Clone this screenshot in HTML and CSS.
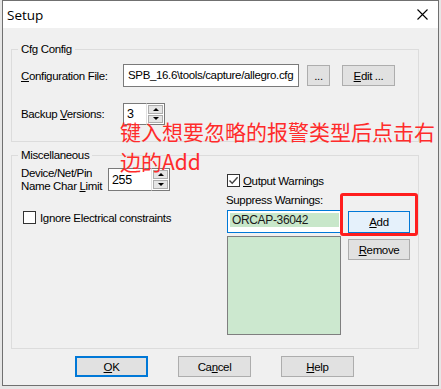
FILE: index.html
```html
<!DOCTYPE html>
<html>
<head>
<meta charset="utf-8">
<link rel="stylesheet" href="styles.css">
</head>
<body>
<div class="dialog">
  <div class="titlebar">
    <span class="title">Setup</span>
    <svg class="close" width="11" height="11" viewBox="0 0 11 11"><path d="M0.5 0.5L10.5 10.5M10.5 0.5L0.5 10.5" stroke="#000" stroke-width="1.1" fill="none"/></svg>
  </div>
  <div class="content">
    <fieldset class="group cfg">
      <legend>Cfg Config</legend>
      <div class="row row-file">
        <span class="label w-cfg"><u>C</u>onfiguration File:</span>
        <div class="edit file">SPB_16.6\tools/capture/allegro.cfg</div>
        <div class="btn browse">...</div>
        <div class="btn editbtn"><u>E</u>dit ...</div>
      </div>
      <div class="row row-backup">
        <span class="label w-cfg">Backup <u>V</u>ersions:</span>
        <div class="spin spin-small">
          <div class="spin-val">3</div>
          <div class="spin-btns"><div class="sb"><i class="tri up"></i></div><div class="sb"><i class="tri down"></i></div></div>
        </div>
      </div>
    </fieldset>

    <fieldset class="group misc">
      <legend>Miscellaneous</legend>
      <div class="misc-body">
        <div class="misc-left">
          <div class="limit-row">
            <span class="label limit-label">Device/Net/Pin<br>Name Char <u>L</u>imit</span>
            <div class="spin spin-wide">
              <div class="spin-val">255</div>
              <div class="spin-btns"><div class="sb"><i class="tri up"></i></div><div class="sb"><i class="tri down"></i></div></div>
            </div>
          </div>
          <div class="check-row ignore">
            <span class="checkbox"></span>
            <span class="check-text">Ignore Electrical constraints</span>
          </div>
        </div>
        <div class="misc-right">
          <div class="check-row output">
            <span class="checkbox"><svg width="11" height="11" viewBox="0 0 11 11"><path d="M1.5 5.5L4.2 8.3L9.6 2.2" stroke="#444" stroke-width="1.4" fill="none"/></svg></span>
            <span class="check-text"><u>O</u>utput Warnings</span>
          </div>
          <div class="suppress-label">Suppress Warnings:</div>
          <div class="warn-area">
            <div class="warn-lists">
              <div class="warn-edit"><span class="sel">ORCAP-36042</span></div>
              <div class="warn-list"></div>
            </div>
            <div class="warn-btns">
              <div class="btn add"><u>A</u>dd</div>
              <div class="btn remove"><u>R</u>emove</div>
            </div>
          </div>
        </div>
      </div>
    </fieldset>

    <div class="footer">
      <div class="btn fbtn ok"><u>O</u>K</div>
      <div class="btn fbtn">Ca<u>n</u>cel</div>
      <div class="btn fbtn"><u>H</u>elp</div>
    </div>
  </div>

  <div class="note">键入想要忽略的报警类型后点击右<br>边的Add</div>
  <div class="highlight-box"></div>
</div>
</body>
</html>
```
FILE: styles.css
```css
* { box-sizing: border-box; }
html, body { margin: 0; padding: 0; }
body {
  width: 441px;
  height: 389px;
  overflow: hidden;
  background: #e6e6e6;
  font-family: "Liberation Sans", Arial, sans-serif;
  font-size: 11.5px;
  letter-spacing: -0.35px;
  color: #000;
}
u { text-decoration: underline; text-underline-offset: 1px; }

.dialog {
  position: relative;
  margin-left: 2px;
  width: 437px;
  height: 386px;
  border: 1px solid #707070;
  background: #f0f0f0;
  display: flex;
  flex-direction: column;
}

.titlebar {
  height: 27px;
  flex: none;
  background: #fff;
  display: flex;
  align-items: center;
  justify-content: space-between;
  padding: 0 10px 0 4px;
}
.title {
  font-family: "Open Sans", "Noto Sans", sans-serif;
  font-size: 13.5px;
  letter-spacing: 0;
  line-height: 18px;
}
.close { display: block; }

.content {
  padding: 14px 0 0 8px;
}

.group {
  margin: 0;
  width: 408px;
  border: 1px solid #dcdcdc;
  padding: 7px 8px 16px 9px;
  min-width: 0;
}
.group legend {
  line-height: 15px;
  padding: 0 3px;
  margin-left: -3px;
}

.row { display: flex; align-items: center; }
.row-file { height: 23px; }
.row-backup { height: 22px; margin-top: 16px; }
.label { flex: none; white-space: nowrap; }
.w-cfg { width: 102px; }

.edit {
  background: #fff;
  border: 1px solid #7a7a7a;
}
.file {
  width: 176px;
  height: 23px;
  line-height: 21px;
  padding-left: 4px;
  white-space: nowrap;
  overflow: hidden;
}

.btn {
  background: #e1e1e1;
  border: 1px solid #adadad;
  display: flex;
  align-items: center;
  justify-content: center;
  white-space: nowrap;
}
.browse { width: 23px; height: 21px; margin-left: 8px; }
.editbtn { width: 53px; height: 21px; margin-left: 12px; }

.spin { display: flex; flex: none; }
.spin-small { height: 22px; }
.spin-wide { height: 23px; }
.spin-val {
  background: #fff;
  border: 1px solid #7a7a7a;
  border-right: none;
  padding-left: 3px;
  display: flex;
  align-items: center;
  font-size: 12.5px;
}
.spin-small .spin-val { width: 23px; }
.spin-wide .spin-val { width: 43px; }
.spin-btns {
  width: 19px;
  display: flex;
  flex-direction: column;
  background: #fff;
  border: 1px solid #7a7a7a;
  border-left: 1px solid #e0e0e0;
  padding: 1px;
  gap: 1px;
}
.sb {
  flex: 1;
  background: #e5e5e5;
  border: 1px solid #adadad;
  display: flex;
  align-items: center;
  justify-content: center;
}
.tri { display: block; width: 0; height: 0; border-left: 3px solid transparent; border-right: 3px solid transparent; }
.tri.up { border-bottom: 3px solid #000; }
.tri.down { border-top: 3px solid #000; }

.misc { margin-top: 6px; padding: 0 8px 13px 9px; }
.misc-body { display: flex; }
.misc-left { width: 205px; flex: none; }
.limit-row { display: flex; align-items: flex-start; }
.limit-label { width: 87px; line-height: 13px; margin-top: 4px; }
.spin-wide { margin-top: 5px; }

.check-row { display: flex; align-items: center; height: 13px; white-space: nowrap; }
.checkbox {
  width: 13px;
  height: 13px;
  flex: none;
  border: 1px solid #333;
  background: #fff;
  display: flex;
  align-items: center;
  justify-content: center;
}
.checkbox svg { display: block; }
.ignore { margin-top: 18px; padding-left: 2px; }
.ignore .check-text { margin-left: 4px; }

.misc-right { flex: 1; }
.output { margin-top: 11px; padding-left: 1px; }
.output .check-text { margin-left: 3px; }
.suppress-label { margin-top: 7px; line-height: 13px; }

.warn-area { display: flex; margin-top: 3px; }
.warn-lists { width: 114px; margin-left: 1px; }
.warn-edit {
  height: 23px;
  background: #fff;
  border: 1px solid #0078d7;
  padding: 2px 1px 0 2px;
}
.sel {
  display: block;
  background: #c8e7ca;
  height: 14px;
  line-height: 14px;
  padding-left: 2px;
  color: #1a1a1a;
  font-size: 12px;
}
.warn-list {
  margin-top: 3px;
  height: 99px;
  background: #cce8cf;
  border: 1px solid #7f7f7f;
}
.warn-btns { margin-left: 7px; width: 62px; }
.add { height: 22px; margin-top: 1px; background: #e5f1fb; border-color: #0078d7; }
.remove { height: 21px; margin-top: 6px; }

.footer {
  display: flex;
  gap: 30px;
  margin-top: 7px;
  margin-left: 64px;
}
.fbtn { width: 73px; height: 21px; }
.ok { border: 2px solid #0078d7; }

.note {
  position: absolute;
  left: 117px;
  top: 115px;
  width: 320px;
  font-family: "Noto Sans CJK SC", "Noto Sans", sans-serif;
  font-size: 21px;
  letter-spacing: 0;
  line-height: 30px;
  color: #ff2b2b;
  white-space: nowrap;
}
.highlight-box {
  position: absolute;
  left: 337px;
  top: 192px;
  width: 78px;
  height: 43px;
  border: 3px solid #ff1e1e;
  border-radius: 3px;
}
```
